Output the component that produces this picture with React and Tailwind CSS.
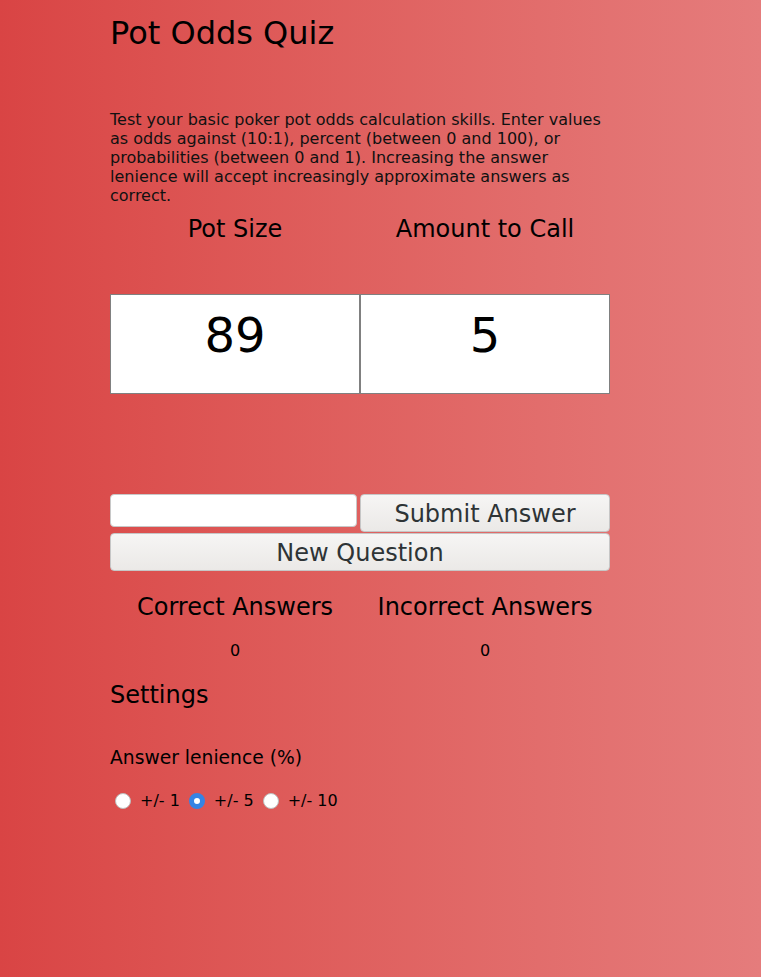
import { useState } from 'react'

const LENIENCE = [1, 5, 10]

function App() {
  const [answer, setAnswer] = useState('')
  const [lenience, setLenience] = useState(5)

  return (
    <div
      className="min-h-[977px] w-full bg-gradient-to-r from-[#d94444] to-[#e57c7c] text-black"
      style={{ fontFamily: '"DejaVu Sans", "Liberation Sans", sans-serif' }}
    >
      <div className="ml-[110px] w-[500px] pt-[15px]">
        <h1 className="text-[32px] leading-[37px]">Pot Odds Quiz</h1>

        <p className="mt-[58px] text-[16px] leading-[19px] text-[#111]">
          Test your basic poker pot odds calculation skills. Enter values as odds against (10:1), percent
          (between 0 and 100), or probabilities (between 0 and 1). Increasing the answer lenience will
          accept increasingly approximate answers as correct.
        </p>

        {/* Question */}
        <div className="mt-[10px] grid grid-cols-2">
          <div className="text-center text-[24px] leading-[28px]">Pot Size</div>
          <div className="text-center text-[24px] leading-[28px]">Amount to Call</div>
        </div>
        <div className="mt-[51px] grid grid-cols-2">
          <div className="h-[100px] border border-[#808080] bg-white text-center text-[48px] leading-[80px]">89</div>
          <div className="h-[100px] border border-[#808080] bg-white text-center text-[48px] leading-[80px]">5</div>
        </div>

        {/* Answer */}
        <div className="mt-[100px] flex items-start gap-[3px]">
          <input
            value={answer}
            onChange={(e) => setAnswer(e.target.value)}
            className="h-[33px] w-[247px] rounded-[4px] border border-[#c8c8c8] bg-white px-2 text-base outline-none"
          />
          <button className="h-[38px] flex-1 rounded-[4px] border border-[#c6c6c6] bg-gradient-to-b from-[#f6f5f4] to-[#ebe9e7] pt-[1px] text-[24px] leading-[28px] text-[#2e3436]">
            Submit Answer
          </button>
        </div>
        <button className="mt-[1px] block h-[38px] w-[500px] rounded-[4px] border border-[#c6c6c6] bg-gradient-to-b from-[#f6f5f4] to-[#ebe9e7] pt-[1px] text-[24px] leading-[28px] text-[#2e3436]">
          New Question
        </button>

        {/* Score */}
        <div className="mt-[22px] grid grid-cols-2">
          <div className="text-center">
            <div className="text-[24px] leading-[28px]">Correct Answers</div>
            <div className="mt-[20px] text-[16px] leading-[19px]">0</div>
          </div>
          <div className="text-center">
            <div className="text-[24px] leading-[28px]">Incorrect Answers</div>
            <div className="mt-[20px] text-[16px] leading-[19px]">0</div>
          </div>
        </div>

        {/* Settings */}
        <h2 className="mt-[21px] text-[24px] leading-[28px]">Settings</h2>
        <div className="mt-[38px] text-[18.72px] leading-[22px]">Answer lenience (%)</div>
        <div className="mt-[22px] flex h-[19px] items-center text-[16px] leading-[19px]">
          {LENIENCE.map((v, i) => (
            <label key={v} className={`flex items-center ${i === 0 ? 'ml-[5px]' : 'ml-[9px]'}`}>
              <input
                type="radio"
                name="lenience"
                checked={lenience === v}
                onChange={() => setLenience(v)}
                className="h-[16px] w-[16px] appearance-none rounded-full border border-[#bdbdbd] bg-white checked:border-[5px] checked:border-[#3584e4]"
              />
              <span className="ml-[9px]">+/- {v}</span>
            </label>
          ))}
        </div>
      </div>
    </div>
  )
}

export default App
